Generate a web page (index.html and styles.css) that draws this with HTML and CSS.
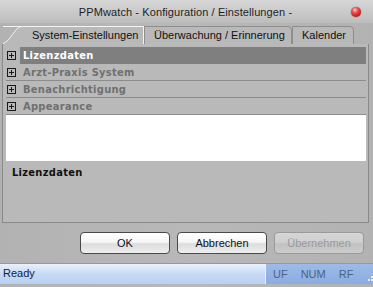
FILE: index.html
```html
<!DOCTYPE html>
<html lang="de">
<head>
  <meta charset="UTF-8" />
  <title>PPMwatch - Konfiguration / Einstellungen -</title>
  <link rel="stylesheet" href="styles.css">
</head>
<body>
  <div class="window">
    <!-- Title bar -->
    <div class="titlebar">
      <span class="title">PPMwatch - Konfiguration / Einstellungen -</span>
      <span class="close-btn"></span>
    </div>

    <!-- Tabs -->
    <div class="tabs">
      <div class="tab active">
        <svg class="tab-curve" width="24" height="18" viewBox="0 0 24 18">
          <path d="M0 18 C6 16 10 6 15 2 C17 0.8 19 0.5 24 0.5 L24 18 Z" fill="#b9b9b9"/>
          <path d="M0 17.5 C6 16 10 6 15 2 C17 0.8 19 0.5 24 0.5" fill="none" stroke="#f4f4f4" stroke-width="1"/>
        </svg>
        <span class="tab-label">System-Einstellungen</span>
      </div>
      <div class="tab">Überwachung / Erinnerung</div>
      <div class="tab">Kalender</div>
    </div>

    <!-- Tab panel -->
    <div class="panel">
      <div class="tree">
        <div class="tree-row selected">
          <span class="plus"></span>
          <span class="row-label">Lizenzdaten</span>
        </div>
        <div class="tree-row">
          <span class="plus"></span>
          <span class="row-label">Arzt-Praxis System</span>
        </div>
        <div class="tree-row">
          <span class="plus"></span>
          <span class="row-label">Benachrichtigung</span>
        </div>
        <div class="tree-row">
          <span class="plus"></span>
          <span class="row-label">Appearance</span>
        </div>
      </div>
      <div class="white-box"></div>
      <div class="section-title">Lizenzdaten</div>
    </div>

    <!-- Buttons -->
    <div class="buttons">
      <button class="btn">OK</button>
      <button class="btn">Abbrechen</button>
      <button class="btn disabled">Übernehmen</button>
    </div>

    <!-- Status bar -->
    <div class="statusbar">
      <div class="status-main">Ready</div>
      <div class="status-ind">
        <span class="ind">UF</span>
        <span class="ind">NUM</span>
        <span class="ind">RF</span>
        <svg class="grip" width="9" height="9" viewBox="0 0 9 9">
          <rect x="7" y="1" width="2" height="2" fill="#e8f0ff"/>
          <rect x="4" y="4" width="2" height="2" fill="#e8f0ff"/>
          <rect x="7" y="4" width="2" height="2" fill="#e8f0ff"/>
          <rect x="1" y="7" width="2" height="2" fill="#e8f0ff"/>
          <rect x="4" y="7" width="2" height="2" fill="#e8f0ff"/>
          <rect x="7" y="7" width="2" height="2" fill="#e8f0ff"/>
        </svg>
      </div>
    </div>
  </div>
</body>
</html>
```

FILE: styles.css
```css
* {
  box-sizing: border-box;
  margin: 0;
  padding: 0;
}
body {
  width: 373px;
  height: 287px;
  overflow: hidden;
  background: #b4b4b4;
  font-family: 'Liberation Sans', Arial, sans-serif;
  font-size: 11px;
}

.window {
  width: 373px;
  height: 287px;
  display: flex;
  flex-direction: column;
  background: linear-gradient(to right, #b2b2b2, #b8b8b8 50%, #b2b2b2);
}

/* Title bar */
.titlebar {
  height: 23px;
  display: flex;
  align-items: center;
  justify-content: center;
  position: relative;
  background: linear-gradient(to bottom, #d6d6d6, #c8c8c8 60%, #bcbcbc);
  color: #1e1e1e;
  font-size: 11px;
  white-space: nowrap;
}
.title {
  padding-top: 1px;
  padding-right: 2px;
  letter-spacing: 0.1px;
}
.close-btn {
  position: absolute;
  right: 12px;
  top: 7px;
  width: 10px;
  height: 10px;
  border-radius: 50%;
  background: radial-gradient(circle at 40% 30%, #ffd0d0 0, #f05050 30%, #b01010 80%);
  box-shadow: 0 0 1px #600;
}

/* Tabs */
.tabs {
  height: 21px;
  display: flex;
  align-items: flex-end;
  padding-left: 3px;
  white-space: nowrap;
}
.tab {
  height: 18px;
  padding: 0 8px;
  border: 1px solid #8e8e8e;
  border-bottom: none;
  border-radius: 0 5px 0 0;
  color: #111;
  font-size: 11px;
  line-height: 17px;
  background: #b9b9b9;
}
.tab.active {
  height: 18px;
  display: flex;
  align-items: flex-end;
  padding: 0;
  border: none;
  border-top: 1px solid #f4f4f4;
  border-right: 1px solid #f4f4f4;
  border-radius: 0;
  background: none;
  width: 141px;
}
.tab-curve {
  flex: none;
  margin-top: -1px;
}
.tab-label {
  flex: 1;
  height: 17px;
  background: #b9b9b9;
  line-height: 16px;
  padding-left: 5px;
}
.tab:nth-child(2) {
  width: 148px;
  padding-left: 9px;
}
.tab:nth-child(3) {
  width: 62px;
  padding-left: 9px;
}

/* Panel */
.panel {
  height: 179px;
  margin: 0 4px 0 2px;
  border-left: 1px solid #8a8a8a;
  border-right: 1px solid #8a8a8a;
  border-bottom: 1px solid #8a8a8a;
  background: #b9b9b9;
  padding: 3px 2px 0 3px;
  display: flex;
  flex-direction: column;
}
.tree-row {
  height: 17px;
  display: flex;
  align-items: center;
  border-bottom: 1px solid #8c8c8c;
  font-family: 'DejaVu Sans Condensed', 'DejaVu Sans', sans-serif;
  font-weight: bold;
  font-size: 11px;
  color: #707070;
}
.tree-row.selected {
  border-bottom: none;
}
.tree-row.selected .row-label {
  background: #7f7f7f;
  color: #fff;
  align-self: stretch;
  display: flex;
  align-items: center;
}
.plus {
  flex: none;
  width: 9px;
  height: 9px;
  margin: 0 4px 0 1px;
  border: 1px solid #1a1a1a;
  background:
    linear-gradient(#1a1a1a, #1a1a1a) center / 5px 1px no-repeat,
    linear-gradient(#1a1a1a, #1a1a1a) center / 1px 5px no-repeat;
}
.row-label {
  flex: 1;
  padding-left: 3px;
  letter-spacing: 0.3px;
}
.white-box {
  height: 46px;
  background: #fff;
}
.section-title {
  padding: 5px 0 0 6px;
  font-family: 'DejaVu Sans Condensed', 'DejaVu Sans', sans-serif;
  font-weight: bold;
  font-size: 11px;
  color: #111;
  letter-spacing: 0.3px;
}

/* Buttons */
.buttons {
  height: 40px;
  display: flex;
  justify-content: flex-end;
  align-items: center;
  gap: 7px;
  padding: 0 9px 0 0;
}
.btn {
  width: 90px;
  height: 22px;
  border: 1px solid #4a4a4a;
  border-radius: 4px;
  background: linear-gradient(to bottom, #ffffff 0, #f6f6f6 45%, #dcdcdc 55%, #efefef 100%);
  font-family: 'Liberation Sans', Arial, sans-serif;
  font-size: 11px;
  color: #111;
}
.btn.disabled {
  border-color: #9a9a9a;
  color: #9a9a9a;
  background: linear-gradient(to bottom, #d6d6d6 0, #d0d0d0 45%, #c2c2c2 55%, #cccccc 100%);
}

/* Status bar */
.statusbar {
  height: 21px;
  display: flex;
  border-top: 1px solid #7c9bd0;
  font-size: 11px;
}
.status-main {
  flex: 1;
  padding-left: 3px;
  line-height: 19px;
  color: #10203a;
  background: linear-gradient(to bottom, #eaf1fc, #c6daf6 50%, #b8d0f2);
  border-right: 1px solid #e8f0ff;
}
.status-ind {
  width: 107px;
  display: flex;
  align-items: center;
  padding-left: 7px;
  color: #4b6286;
  background: linear-gradient(to bottom, #9dbbe8, #8cacdf);
}
.ind {
  margin-right: 13px;
}
.ind:nth-child(3) {
  margin-right: 14px;
}
.grip {
  flex: none;
  align-self: flex-end;
  margin-bottom: 3px;
}
```
